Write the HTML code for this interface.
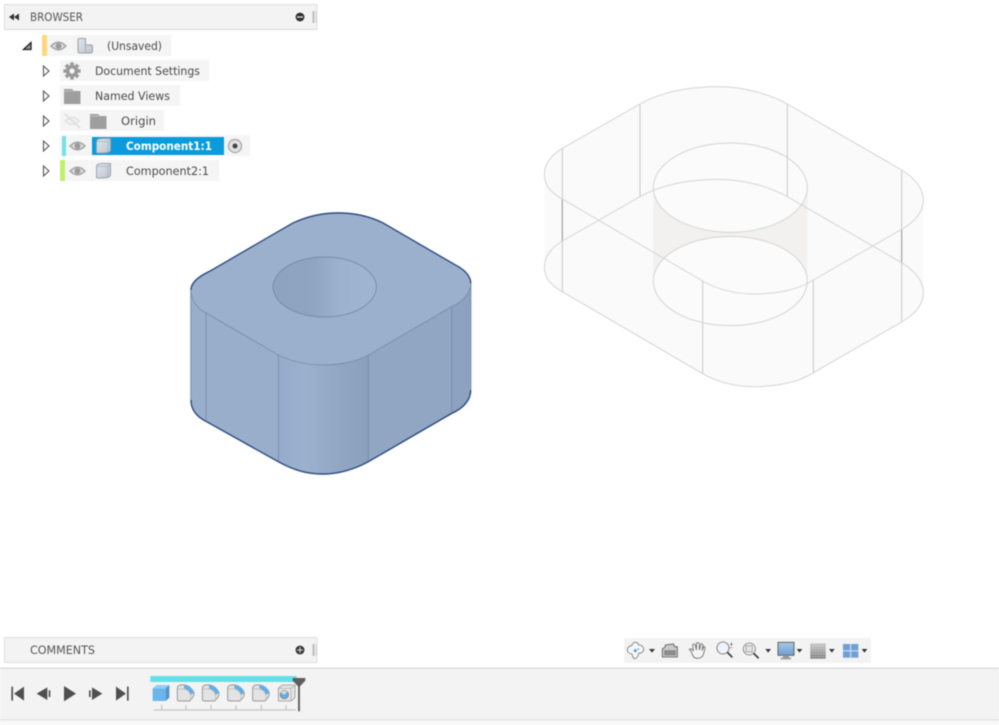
<!DOCTYPE html>
<html><head><meta charset="utf-8">
<style>
html,body{margin:0;padding:0;background:#fff;width:999px;height:725px;overflow:hidden}
svg{display:block;position:absolute;left:0;top:0;filter:blur(.45px)}
text{font-family:"DejaVu Sans","Liberation Sans",sans-serif;font-size:11.6px;fill:#4a4a4a}
</style></head><body>
<svg width="999" height="725" viewBox="0 0 999 725" xmlns="http://www.w3.org/2000/svg">
<defs>
<linearGradient id="hole" x1="0" x2="1" y1="0" y2="0">
<stop offset="0" stop-color="#8ea3c0"/><stop offset=".4" stop-color="#8fa5c2"/><stop offset=".65" stop-color="#9db2cf"/><stop offset="1" stop-color="#a1b5d1"/></linearGradient>
<linearGradient id="corner" x1="0" x2="1" y1="0" y2="0">
<stop offset="0" stop-color="#96abca"/><stop offset=".3" stop-color="#9cb1ce"/><stop offset=".7" stop-color="#90a6c3"/><stop offset="1" stop-color="#8ba0bc"/></linearGradient>
<linearGradient id="grid" x1="0" x2="0" y1="0" y2="1">
<stop offset="0" stop-color="#c6c6c6"/><stop offset="1" stop-color="#757575"/></linearGradient>
<linearGradient id="mon" x1="0" x2="0" y1="0" y2="1">
<stop offset="0" stop-color="#a9c8e8"/><stop offset="1" stop-color="#6d9fd2"/></linearGradient>
<linearGradient id="cb" x1="0" x2="1" y1="0" y2="1">
<stop offset="0" stop-color="#e2e6ec"/><stop offset="1" stop-color="#bcc4cf"/></linearGradient>
<path id="fil" d="M0,8 Q2,2 9,0 Q38,-3 50,24 Q50,36 42,42 L36,48 L6,48 Q0,48 0,42 Z"/>
</defs>

<!-- Ghost body -->
<g transform="translate(535 80) scale(.33333)" fill="none" stroke="#d4d4d4" stroke-width="3">
<path fill="#fafafa" stroke="none" d="M28,283 C28,250 50,225 82,205 L315,72 C390,30 480,20 550,20 C620,20 700,40 757,72 L1100,270 C1140,295 1165,325 1165,360 L1165,638 C1165,675 1140,705 1100,728 L835,880 C790,908 720,920 660,920 C600,920 550,908 503,880 L82,637 C50,620 28,595 28,560 Z"/>
<path fill="#f2f1ef" stroke="none" d="M355,323 H817 V603 H355 Z"/>
<ellipse cx="586" cy="323" rx="231" ry="134" fill="#fbfbfb" stroke="none"/>
<ellipse cx="586" cy="603" rx="231" ry="134" fill="#fbfbfb" stroke="none"/>
<path d="M82,205 V637 M315,72 V350 M757,72 V350 M1100,270 V728 M503,603 V880 M835,600 V880" stroke="#c8c8c8"/>
<path d="M82,357 V485 M1100,448 V550" stroke="#9c9c9c"/>
<path id="gf" d="M82,205 L315,72 C390,30 480,20 550,20 C620,20 700,40 757,72 L1100,270 C1140,295 1165,325 1165,360 C1165,395 1140,425 1100,448 L835,600 C790,630 720,642 660,642 C600,642 550,630 503,603 L82,357 C50,340 28,315 28,283 C28,250 50,225 82,205Z"/>
<use href="#gf" transform="translate(0 278)"/>
<ellipse cx="586" cy="323" rx="231" ry="134"/>
<ellipse cx="586" cy="603" rx="231" ry="134"/>
</g>

<!-- Solid blue body -->
<g transform="translate(180 200) scale(.33333)">
<path fill="#93a9c7" stroke="#c3d2ea" stroke-width="7" d="M33,270 C33,248 55,230 89,214 L339,69 C385,48 430,39 474,39 C520,39 565,47 609,69 L824,194 C855,210 872,228 872,250 L872,570 C872,600 850,625 815,640 L565,785 C520,810 470,822 430,822 C380,822 340,810 295,785 L80,665 C50,650 33,630 33,600 Z"/>
<path fill="#99aecb" d="M33,270 L33,600 C33,630 50,650 80,665 L295,785 L295,465 L80,340 C50,325 33,300 33,270Z"/>
<path fill="#91a6c3" d="M565,465 L565,785 L815,640 L815,320Z"/>
<path fill="#8da2c0" d="M815,320 C850,305 872,280 872,250 V570 C872,600 850,625 815,640Z"/>
<path fill="url(#corner)" d="M295,465 C335,485 380,495 430,495 C480,495 530,485 565,465 V785 C520,810 470,822 430,822 C380,822 340,810 295,785Z"/>
<path fill="#9bb0cc" d="M33,270 C33,248 55,230 89,214 L339,69 C385,48 430,39 474,39 C520,39 565,47 609,69 L824,194 C855,210 872,228 872,250 C872,280 850,305 815,320 L565,465 C530,485 480,495 430,495 C380,495 335,485 295,465 L80,340 C50,325 33,300 33,270Z"/>
<ellipse cx="434" cy="261" rx="155" ry="90" fill="url(#hole)" stroke="#6a80a2" stroke-width="2"/>
<path fill="none" stroke="#6f84a4" stroke-width="2" d="M33,270 C33,300 50,325 80,340 L295,465 C335,485 380,495 430,495 C480,495 530,485 565,465 L815,320 C850,305 872,280 872,250 M78,338 V665 M295,465 V785 M565,465 V785 M815,320 V640 M33,270 V600 M872,250 V570"/>
<path fill="none" stroke="#223f73" stroke-width="3.500" d="M33,270 C33,248 55,230 89,214 L339,69 C385,48 430,39 474,39 C520,39 565,47 609,69 L824,194 C855,210 872,228 872,250 M33,600 C33,630 50,650 80,665 L295,785 C340,810 380,822 430,822 C470,822 520,810 565,785 L815,640 C850,625 872,600 872,570"/>
</g>

<!-- Browser panel -->
<rect x="4.5" y="4.5" width="312.5" height="25" fill="#f3f3f3" stroke="#dedede"/>
<path d="M9,17 L14,13.5 V20.5Z M14,17 L19,13.5 V20.5Z" fill="#333"/>
<text x="30" y="21" textLength="53" lengthAdjust="spacingAndGlyphs" style="font-size:11.4px;fill:#555">BROWSER</text>
<circle cx="300" cy="17" r="4.4" fill="#2e2e2e"/><rect x="297" y="16.2" width="6" height="1.6" fill="#ccc"/>
<rect x="312.5" y="11" width="2" height="12" fill="#bdbdbd"/><rect x="315.5" y="11" width="1" height="12" fill="#d5d5d5"/>

<!-- Rows -->
<g fill="#f5f5f5">
<rect x="42" y="35" width="129" height="21"/>
<rect x="60" y="60" width="149" height="21"/>
<rect x="60" y="85" width="120" height="21"/>
<rect x="60" y="110" width="104" height="21"/>
<rect x="60" y="135" width="190" height="21"/>
<rect x="60" y="160" width="159" height="21"/>
</g>
<rect x="42" y="35" width="5" height="21" fill="#ffd67c"/>
<rect x="62" y="136" width="4" height="20" fill="#72e2e6"/>
<rect x="60" y="160" width="5" height="21" fill="#bff06c"/>
<rect x="92" y="137" width="132" height="18" fill="#0a9bdc"/>

<!-- Tree arrows -->
<path d="M23.5,49.5 L31,42.5 V49.5Z" fill="#999" stroke="#222" stroke-width="1.3"/>
<g fill="#fff" stroke="#555" stroke-width="1.1">
<path d="M43.5,66 L49,71 L43.5,76Z"/>
<path d="M43.5,91 L49,96 L43.5,101Z"/>
<path d="M43.5,116 L49,121 L43.5,126Z"/>
<path d="M43.5,141 L49,146 L43.5,151Z"/>
<path d="M43.5,166 L49,171 L43.5,176Z"/>
</g>

<!-- Eyes -->
<g id="eye"><path d="M51,46 Q58.500,38.500 66,46 Q58.500,53.500 51,46Z" fill="#dcdcdc" stroke="#a2a2a2" stroke-width="1.4"/><circle cx="58.500" cy="46" r="3" fill="#9b9b9b"/></g>
<use href="#eye" transform="translate(19 100)"/>
<use href="#eye" transform="translate(19 125)"/>
<g opacity=".55"><path d="M65,121 Q72,114 79,121 Q72,128 65,121Z" fill="#eee" stroke="#d2d2d2" stroke-width="1.4"/><path d="M65,114 L80,128" stroke="#d2d2d2" stroke-width="2"/></g>

<!-- Assembly icon -->
<path d="M78,40 Q78,38.500 80,38.500 H85.500 V45 H91 Q92.500,45 92.500,47 V51 Q92.500,53 90,53 H80 Q78,53 78,51Z" fill="url(#cb)" stroke="#9aa0a8"/>
<path d="M85.500,45 V53" stroke="#a8aeb6" fill="none"/>

<!-- Gear -->
<g transform="translate(72 71)" fill="#9a9a9a">
<circle r="6.200"/>
<g id="t"><rect x="-1.800" y="-8.600" width="3.600" height="17.200"/></g>
<use href="#t" transform="rotate(45)"/><use href="#t" transform="rotate(90)"/><use href="#t" transform="rotate(135)"/>
<circle r="2.600" fill="#f5f5f5"/>
</g>
<!-- Folders -->
<path id="fd" d="M64,89 H72 L74,91 H80.500 V104 H64Z" fill="#9e9e9e"/>
<path d="M64,91 H74" stroke="#c8c8c8" stroke-width=".8"/>
<use href="#fd" transform="translate(26 25)"/>
<path d="M90,116 H100" stroke="#c8c8c8" stroke-width=".8"/>

<!-- Cubes -->
<g id="cube"><path d="M96.500,142 Q96.500,139.500 99,139 L102,138.500 H110.500 V150 Q110.500,151 109,152 Q106,153 101,153 H97.500 Q96.500,153 96.500,152Z" fill="url(#cb)" stroke="#9aa3ad" stroke-width="1"/><path d="M97,141.500 H106.500 Q108,141.500 108,143 V152.500 M108,141.500 L110.500,138.800" fill="none" stroke="#a8b0ba" stroke-width=".8"/></g>
<use href="#cube" transform="translate(0 25)"/>
<!-- Radio -->
<circle cx="235" cy="146" r="6.600" fill="#e0e0e0" stroke="#9a9a9a"/><circle cx="235" cy="146" r="2.500" fill="#444"/>

<!-- Row text -->
<text x="107" y="50" textLength="55" lengthAdjust="spacingAndGlyphs">(Unsaved)</text>
<text x="95" y="75" textLength="105" lengthAdjust="spacingAndGlyphs">Document Settings</text>
<text x="95" y="100" textLength="75" lengthAdjust="spacingAndGlyphs">Named Views</text>
<text x="121" y="125" textLength="35" lengthAdjust="spacingAndGlyphs">Origin</text>
<text x="126" y="150" textLength="86" lengthAdjust="spacingAndGlyphs" style="fill:#fff;font-weight:bold;font-size:11.2px">Component1:1</text>
<text x="126" y="175" textLength="83" lengthAdjust="spacingAndGlyphs">Component2:1</text>

<!-- Comments panel -->
<rect x="4.500" y="637.500" width="312.500" height="25" fill="#f3f3f3" stroke="#dedede"/>
<text x="30" y="654" textLength="65" lengthAdjust="spacingAndGlyphs" style="font-size:11.4px;fill:#555">COMMENTS</text>
<circle cx="300" cy="650" r="4.400" fill="#2e2e2e"/><path d="M297,650 H303 M300,647 V653" stroke="#ccc" stroke-width="1.300"/>
<rect x="312.500" y="644" width="2" height="12" fill="#bdbdbd"/><rect x="315.500" y="644" width="1" height="12" fill="#d5d5d5"/>

<!-- Timeline -->
<rect x="0" y="668" width="999" height="51" fill="#f3f3f3"/>
<rect x="0" y="667.500" width="999" height="1.500" fill="#dcdcdc"/>
<rect x="0" y="719" width="999" height="1.500" fill="#e4e4e4"/>
<rect x="0" y="720.500" width="999" height="4.500" fill="#f8f8f8"/>
<g transform="translate(0 630) scale(.33333)">
<g fill="#4f4f4f">
<rect x="34" y="170" width="5" height="42"/><path d="M72,170 V212 L42,191Z"/>
<path d="M142,172 V210 L110,191Z"/><rect x="146" y="181" width="5" height="20"/>
<path d="M192,168 L228,191 L192,214Z"/>
<rect x="267" y="181" width="5" height="20"/><path d="M276,172 L307,191 L276,210Z"/>
<path d="M348,170 L378,191 L348,212Z"/><rect x="381" y="170" width="5" height="42"/>
</g>
<rect x="451" y="138" width="439" height="18" fill="#66e0e6"/>
<path d="M461,240 H888 M485,225 V240 M558,225 V240 M633,225 V240 M708,225 V240 M784,225 V240 M858,225 V240" stroke="#c6c6c6" stroke-width="4" fill="none"/>
<path d="M458,175 H497 V213 H458Z" fill="#68b6ec"/>
<path d="M458,175 L470,165 H508 L497,175Z" fill="#93cef2"/>
<path d="M497,175 L508,165 V203 L497,213Z" fill="#4f94cc"/>
<g id="f1" transform="translate(532 165)">
<use href="#fil" fill="#e3e3e3" stroke="#9a9a9a" stroke-width="3"/>
<path d="M20,2 Q38,-3 51,22 L40,30 Q34,14 20,10Z" fill="#62aee6"/>
<path d="M2,12 H20 Q38,16 40,32 V48" fill="none" stroke="#b8b8b8" stroke-width="2"/>
</g>
<use href="#f1" transform="translate(75 0)"/>
<use href="#f1" transform="translate(151 0)"/>
<use href="#f1" transform="translate(226 0)"/>
<path d="M835,175 L847,165 H885 V203 L873,213 H835Z" fill="#e4e4e4" stroke="#9a9a9a" stroke-width="2.500"/>
<path d="M835,175 H873 V213 M873,175 L885,165" fill="none" stroke="#a8a8a8" stroke-width="2"/>
<circle cx="853" cy="194" r="12.500" fill="#62aee6" stroke="#777" stroke-width="2"/>
<path d="M853,194 L842,188 A12.500,12.500 0 0 1 862,186Z" fill="#d8d8d8"/>
<rect x="894" y="160" width="6" height="84" fill="#666"/>
<path d="M878,144 H916 V152 L897,172 L878,152Z" fill="#5e5e5e"/>
</g>

<!-- Nav bar -->
<rect x="624" y="638" width="247" height="25" fill="#f3f3f3"/>
<g transform="translate(620 630) scale(.33333)">
<path d="M46,37 C52,37 55,42 56,45 C66,45 72,52 71,60 C70,67 62,70 56,70 C54,78 50,86 45,86 C40,86 37,78 36,72 C28,72 22,66 22,60 C22,52 30,47 36,46 C37,42 40,37 46,37Z" fill="#f6f6f6" stroke="#777" stroke-width="2.500"/>
<circle cx="46" cy="62" r="4.500" fill="#4d9ad6"/><circle cx="55" cy="57" r="2.500" fill="#4d9ad6"/>
<path d="M87,57 H105 L96,68Z M436,57 H453 L444.500,68Z M530,57 H547 L538.500,68Z M627,57 H644 L635.500,68Z M725,57 H742 L733.500,68Z" fill="#333"/>
<path d="M127,57 L136,50 V45 L160,42 L164,50 H172 V81 H127Z" fill="#c9c9c9" stroke="#555" stroke-width="2.500"/>
<rect x="134" y="62" width="32" height="13" fill="#8e8e8e" stroke="#666" stroke-width="1.500"/>
<path d="M214,65 L208,58 Q212,54 220,62 L218,44 Q222,40 226,44 L229,60 L230,39 Q235,36 238,40 L238,60 L243,42 Q248,40 249,45 L246,62 L251,50 Q256,49 255,55 L250,74 Q246,85 232,85 Q222,85 218,76Z" fill="#f4f4f4" stroke="#555" stroke-width="2.200"/>
<circle cx="309" cy="54" r="18" fill="#eef4fa" stroke="#666" stroke-width="2.500"/>
<path d="M322,67 L337,82" stroke="#333" stroke-width="5"/>
<path d="M331,43 H337 M334,38 V47" stroke="#444" stroke-width="2"/>
<path d="M327,53 H338" stroke="#888" stroke-width="2"/>
<circle cx="388" cy="57" r="18" fill="#f2f2f2" stroke="#777" stroke-width="2.500"/>
<rect x="378" y="47" width="19" height="19" fill="#e2e2e2" stroke="#888" stroke-width="2"/>
<path d="M401,70 L416,85" stroke="#333" stroke-width="5"/>
<rect x="474" y="37" width="48" height="39" fill="url(#mon)" stroke="#666" stroke-width="3"/>
<path d="M489,76 H507 V83 H513 V88 H482 V83 H489Z" fill="#9a9a9a"/>
<rect x="571" y="40" width="46" height="46" fill="url(#grid)"/>
<path d="M579,40 V86 M587,40 V86 M595,40 V86 M603,40 V86 M611,40 V86 M571,48 H617 M571,56 H617 M571,64 H617 M571,72 H617 M571,80 H617" stroke="#e8e8e8" stroke-width="1.500" opacity=".6"/>
<rect x="669" y="42" width="46" height="41" fill="#6f9fd4"/>
<path d="M692,42 V83 M669,62.500 H715" stroke="#dbe7f4" stroke-width="3"/>
</g>
</svg>
</body></html>
